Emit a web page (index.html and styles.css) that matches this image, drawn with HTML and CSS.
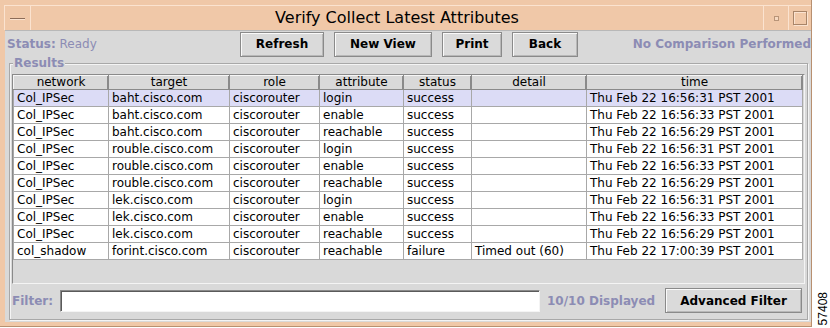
FILE: index.html
```html
<!DOCTYPE html>
<html>
  <head>
    <title>Verify Collect Latest Attributes</title>
    <link rel="stylesheet" href="styles.css">
  </head>
  <body>
    <div class="page">
      <div class="frame">
        <div class="titlebar">
          <div class="tb-btn menu-btn"><span class="bar"></span></div>
          <div class="title">Verify Collect Latest Attributes</div>
          <div class="tb-btn min-btn"><span class="dot"></span></div>
          <div class="tb-btn max-btn"><span class="sq"></span></div>
        </div>
        <div class="panel">
          <div class="toolbar">
            <div class="status"><b>Status:</b> Ready</div>
            <button class="btn w-refresh">Refresh</button>
            <button class="btn w-newview">New View</button>
            <button class="btn w-print">Print</button>
            <button class="btn w-back">Back</button>
            <div class="compare">No Comparison Performed</div>
          </div>
          <div class="group">
            <div class="legend">Results</div>
            <div class="viewport">
              <table class="grid">
                <colgroup>
                  <col style="width:95px"><col style="width:121px"><col style="width:90px">
                  <col style="width:84px"><col style="width:68px"><col style="width:115px">
                  <col style="width:216px">
                </colgroup>
                <thead>
                  <tr><th>network</th><th>target</th><th>role</th><th>attribute</th><th>status</th><th>detail</th><th>time</th></tr>
                </thead>
                <tbody>
                  <tr class="sel"><td>Col_IPSec</td><td>baht.cisco.com</td><td>ciscorouter</td><td>login</td><td>success</td><td></td><td>Thu Feb 22 16:56:31 PST 2001</td></tr>
                  <tr><td>Col_IPSec</td><td>baht.cisco.com</td><td>ciscorouter</td><td>enable</td><td>success</td><td></td><td>Thu Feb 22 16:56:33 PST 2001</td></tr>
                  <tr><td>Col_IPSec</td><td>baht.cisco.com</td><td>ciscorouter</td><td>reachable</td><td>success</td><td></td><td>Thu Feb 22 16:56:29 PST 2001</td></tr>
                  <tr><td>Col_IPSec</td><td>rouble.cisco.com</td><td>ciscorouter</td><td>login</td><td>success</td><td></td><td>Thu Feb 22 16:56:31 PST 2001</td></tr>
                  <tr><td>Col_IPSec</td><td>rouble.cisco.com</td><td>ciscorouter</td><td>enable</td><td>success</td><td></td><td>Thu Feb 22 16:56:33 PST 2001</td></tr>
                  <tr><td>Col_IPSec</td><td>rouble.cisco.com</td><td>ciscorouter</td><td>reachable</td><td>success</td><td></td><td>Thu Feb 22 16:56:29 PST 2001</td></tr>
                  <tr><td>Col_IPSec</td><td>lek.cisco.com</td><td>ciscorouter</td><td>login</td><td>success</td><td></td><td>Thu Feb 22 16:56:31 PST 2001</td></tr>
                  <tr><td>Col_IPSec</td><td>lek.cisco.com</td><td>ciscorouter</td><td>enable</td><td>success</td><td></td><td>Thu Feb 22 16:56:33 PST 2001</td></tr>
                  <tr><td>Col_IPSec</td><td>lek.cisco.com</td><td>ciscorouter</td><td>reachable</td><td>success</td><td></td><td>Thu Feb 22 16:56:29 PST 2001</td></tr>
                  <tr><td>col_shadow</td><td>forint.cisco.com</td><td>ciscorouter</td><td>reachable</td><td>failure</td><td>Timed out (60)</td><td>Thu Feb 22 17:00:39 PST 2001</td></tr>
                </tbody>
              </table>
            </div>
            <div class="filterbar">
              <span class="label">Filter:</span>
              <input class="filter-input" type="text">
              <span class="label count">10/10 Displayed</span>
              <button class="btn w-adv">Advanced Filter</button>
            </div>
          </div>
        </div>
      </div>
      <div class="fignum">57408</div>
    </div>
  </body>
</html>
```

FILE: styles.css
```css
body {
  margin: 0;
  background: #ffffff;
  font-family: "DejaVu Sans", "Noto Sans", sans-serif;
  font-size: 12px;
  color: #000;
}

.page {
  display: flex;
  width: 830px;
  height: 328px;
}

.frame {
  width: 808px;
  height: 321px;
  background: #f0c8a8;
  padding: 5px 0 0 4px;
  border-right: 1px solid #b89070;
  border-bottom: 1px solid #b89070;
  display: flex;
  flex-direction: column;
}

.titlebar {
  display: flex;
  height: 24px;
  border-top: 1px solid #fbe3d0;
  border-left: 1px solid #fbe3d0;
}

.tb-btn {
  display: flex;
  align-items: center;
  justify-content: center;
  border-right: 1px solid #fbe3d0;
}

.menu-btn { width: 25px; }
.menu-btn .bar {
  width: 15px;
  height: 1px;
  background: #8c6c58;
  box-shadow: 0 1px #fbe3d0;
}

.title {
  flex: 1;
  text-align: center;
  font-size: 16px;
  line-height: 24px;
  border-right: 1px solid #fbe3d0;
}

.min-btn { width: 24px; }
.min-btn .dot {
  width: 3px;
  height: 3px;
  border: 1px solid #b89478;
  background: #f6d8c0;
}

.max-btn { width: 22px; border-right: none; }
.max-btn .sq {
  width: 12px;
  height: 12px;
  border: 1px solid #a88468;
  box-shadow: 1px 1px #fbe3d0, inset 1px 1px #fbe3d0;
}

.panel {
  flex: 1;
  margin: 0 0 4px 1px;
  background: #d9d9d9;
  border-top: 1px solid #b8b8b8;
  display: flex;
  flex-direction: column;
}

.toolbar {
  display: flex;
  align-items: center;
  height: 26px;
}

.status {
  width: 233px;
  padding-left: 2px;
  color: #8c8cb4;
}

.btn {
  font-family: "DejaVu Sans", sans-serif;
  font-weight: bold;
  font-size: 12px;
  height: 25px;
  margin-right: 10px;
  padding: 0;
  background: #dadada;
  border: 1px solid #8a8a8a;
  box-shadow: inset 1px 1px #fafafa, inset -1px -1px #b8b8b8;
  color: #000;
}

.w-refresh { width: 84px; }
.w-newview { width: 98px; }
.w-print { width: 60px; }
.w-back { width: 66px; }

.compare {
  margin-left: auto;
  color: #8c8cb4;
  font-weight: bold;
}

.group {
  position: relative;
  flex: 1;
  margin: 6px 3px 2px 4px;
  border: 1px solid #a8a8a8;
  box-shadow: 1px 1px #f4f4f4, inset 1px 1px #f4f4f4;
  padding: 10px 2px 2px 2px;
  display: flex;
  flex-direction: column;
}

.legend {
  position: absolute;
  top: -8px;
  left: 3px;
  padding: 0 1px;
  background: #d9d9d9;
  color: #8c8cb4;
  font-weight: bold;
  line-height: 14px;
}

.viewport {
  height: 208px;
  border: 1px solid #8a8a8a;
  border-right-color: #f4f4f4;
  border-bottom-color: #f4f4f4;
  background: #d9d9d9;
}

.grid {
  border-collapse: collapse;
  table-layout: fixed;
  width: 789px;
}

.grid th {
  font-weight: normal;
  height: 13px;
  line-height: 13px;
  padding: 0;
  background: #d9d9d9;
  border: 1px solid #8a8a8a;
  border-top-color: #f6f6f6;
  border-left-color: #f6f6f6;
  box-shadow: inset -1px 0 #8a8a8a;
  text-align: center;
  overflow: hidden;
  white-space: nowrap;
}

.grid td {
  height: 16px;
  line-height: 16px;
  padding: 0 0 0 3px;
  background: #ffffff;
  border: 1px solid #a8a8a8;
  white-space: nowrap;
  overflow: hidden;
}

.grid tr.sel td { background: #dcdcf6; }

.filterbar {
  display: flex;
  align-items: center;
  height: 25px;
  margin-top: 4px;
}

.label {
  color: #8c8cb4;
  font-weight: bold;
}

.filter-input {
  width: 478px;
  height: 20px;
  margin: 0 7px 0 7px;
  padding: 0;
  border: 1px solid #8a8a8a;
  border-right-color: #f4f4f4;
  border-bottom-color: #f4f4f4;
  box-shadow: inset 1px 1px #5a5a5a;
  background: #fff;
}

.count { width: 118px; }

.w-adv {
  width: 137px;
  margin-right: 0;
}

.fignum {
  align-self: flex-end;
  writing-mode: vertical-rl;
  transform: rotate(180deg);
  font-family: "Liberation Sans", Arial, sans-serif;
  font-size: 12px;
  margin: 0 0 3px 4px;
}
```
